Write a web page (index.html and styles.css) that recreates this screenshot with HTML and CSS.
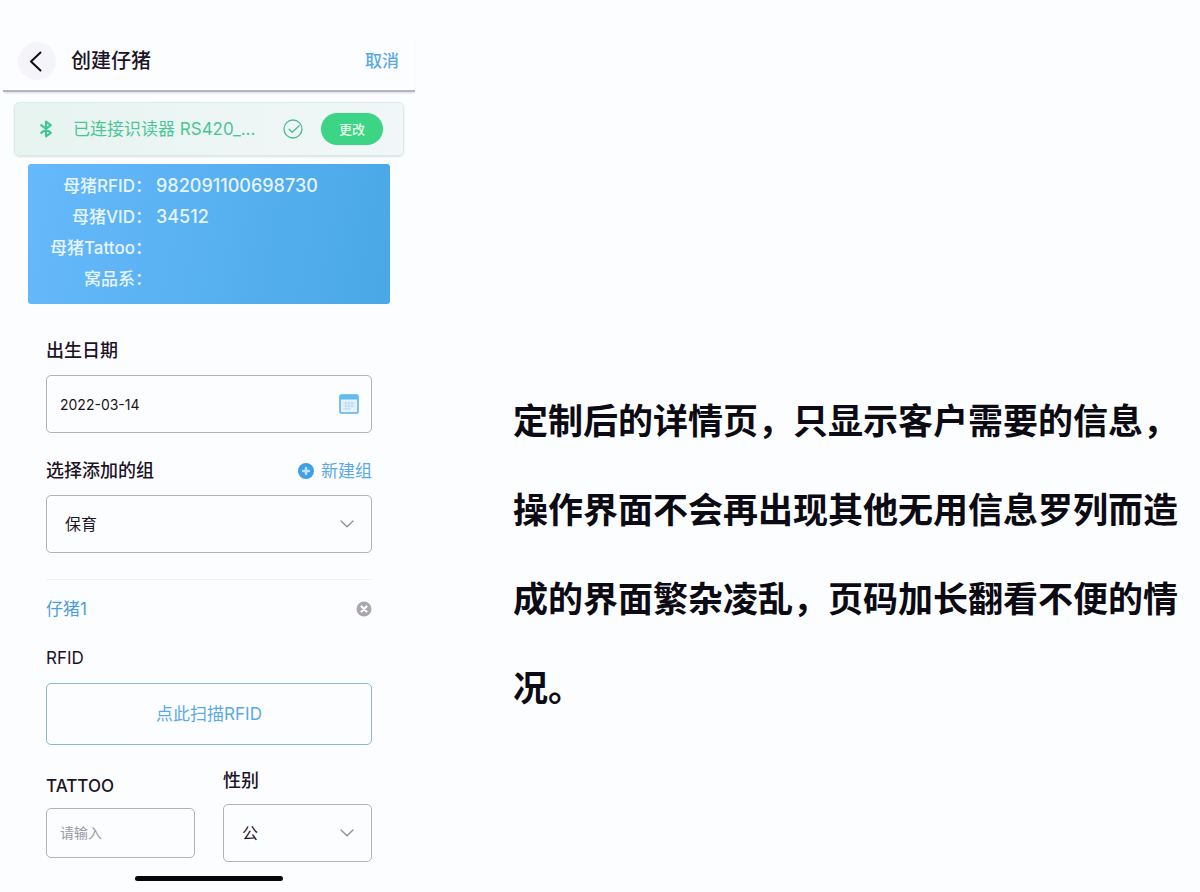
FILE: index.html
```html
<!DOCTYPE html>
<html lang="zh-CN">
<head>
<meta charset="utf-8">
<meta name="viewport" content="width=device-width, initial-scale=1">
<title>创建仔猪</title>
<link rel="stylesheet" href="styles.css">
</head>
<body>
<div class="page">
  <section class="phone">
    <header class="topbar">
      <button class="back" type="button" aria-label="返回">
        <svg width="38" height="38" viewBox="0 0 38 38" fill="none" stroke="#0f0a18" stroke-width="2" stroke-linecap="round" stroke-linejoin="round"><path d="M22.500 10.500L13 19.500l9.500 9"/></svg>
      </button>
      <h1 class="title">创建仔猪</h1>
      <button class="cancel" type="button">取消</button>
    </header>

    <div class="reader">
      <svg class="bluetooth" width="14" height="20" viewBox="0 0 16 20" fill="none" stroke="#3fc793" stroke-width="2.400" stroke-linejoin="round" stroke-linecap="round"><path d="M2.500 5.500l11 9L8 18.500v-17l5.500 4-11 9"/></svg>
      <span class="reader-name">已连接识读器 RS420_...</span>
      <svg class="check" width="20" height="20" viewBox="0 0 20 20" fill="none" stroke="#4fb98e" stroke-width="1.300" stroke-linecap="round" stroke-linejoin="round"><circle cx="10" cy="10" r="9"/><path d="M6.200 10.300l3 2.900 7-6.500"/></svg>
      <button class="change" type="button">更改</button>
    </div>

    <dl class="sow">
      <dt>母猪RFID：</dt><dd>982091100698730</dd>
      <dt>母猪VID：</dt><dd>34512</dd>
      <dt>母猪Tattoo：</dt><dd></dd>
      <dt>窝品系：</dt><dd></dd>
    </dl>

    <form class="form">
      <label class="label" for="birth">出生日期</label>
      <div class="field">
        <input class="box date" id="birth" type="text" value="2022-03-14">
        <svg class="mark" width="20" height="20" viewBox="0 0 20 20"><rect x="1" y="1" width="18" height="18" rx="1.500" fill="#e6f3fc" stroke="#5cb0e8" stroke-width="1.600"/><path d="M1 1h18v4.500H1z" fill="#5fbdf0"/><path d="M4 9h12M4 12h12M4 15h8M7 7.500v8M10 7.500v8M13 7.500v6" stroke="#b9d9f0" stroke-width="1"/></svg>
      </div>

      <div class="row group-row">
        <label class="label" for="group">选择添加的组</label>
        <button class="new-group" type="button">
          <svg width="16" height="16" viewBox="0 0 16 16"><circle cx="8" cy="8" r="8" fill="#3f9fe8"/><path d="M8 5v6M5 8h6" stroke="#bfe0fa" stroke-width="2.400" stroke-linecap="round"/></svg>
          新建组
        </button>
      </div>
      <div class="field">
        <select class="box select" id="group"><option>保育</option></select>
        <svg class="mark chevron" width="14" height="8" viewBox="0 0 14 8" fill="none" stroke="#8a8892" stroke-width="1.200" stroke-linecap="round" stroke-linejoin="round"><path d="M1 1l6 5.800L13 1"/></svg>
      </div>

      <hr class="rule">

      <div class="row piglet-row">
        <h2 class="piglet">仔猪1</h2>
        <button class="remove" type="button" aria-label="删除">
          <svg width="16" height="16" viewBox="0 0 16 16"><circle cx="8" cy="8" r="7.500" fill="#aaa6af"/><path d="M5.500 5.500l5 5M10.500 5.500l-5 5" stroke="#fff" stroke-width="2.200" stroke-linecap="round"/></svg>
        </button>
      </div>

      <div class="label rfid">RFID</div>
      <button class="scan" type="button">点此扫描RFID</button>

      <div class="pair">
        <div class="col">
          <label class="label tattoo" for="tattoo">TATTOO</label>
          <input class="box tattoo-box" id="tattoo" type="text" placeholder="请输入">
        </div>
        <div class="col">
          <label class="label" for="sex">性别</label>
          <div class="field">
            <select class="box select" id="sex"><option>公</option></select>
            <svg class="mark chevron" width="14" height="8" viewBox="0 0 14 8" fill="none" stroke="#8a8892" stroke-width="1.200" stroke-linecap="round" stroke-linejoin="round"><path d="M1 1l6 5.800L13 1"/></svg>
          </div>
        </div>
      </div>
    </form>
    <div class="home"></div>
  </section>

  <p class="note">定制后的详情页，只显示客户需要的信息，操作界面不会再出现其他无用信息罗列而造成的界面繁杂凌乱，页码加长翻看不便的情况。</p>
</div>
</body>
</html>
```
FILE: styles.css
```css
* {
  box-sizing: border-box;
}

body {
  margin: 0;
  background: #fcfdff;
  color: #1c1426;
  font-family: Inter, "Noto Sans CJK SC", sans-serif;
  font-size: 17px;
  line-height: 24px;
}

button,
input,
select {
  font: inherit;
  color: inherit;
  margin: 0;
}

button {
  border: 0;
  padding: 0;
  background: none;
  cursor: pointer;
}

svg {
  display: block;
  flex: none;
}

.page {
  display: flex;
  align-items: flex-start;
  min-height: 100vh;
}

.phone {
  flex: 0 0 35%;
  min-width: 360px;
  padding: 32px 5px 8px 3px;
}

.topbar {
  display: flex;
  align-items: center;
  height: 60px;
  padding: 0 16px 0 15px;
  border-bottom: 2px solid #b6b4be;
  box-shadow: 0 2px 2px -1px #d9d8e0;
}

.back {
  border-radius: 50%;
  background: #f5f5f9;
}

.title {
  flex: 1;
  margin: 0 0 0 15px;
  font-size: 20px;
  font-weight: 500;
}

.cancel {
  color: #5aa9e6;
  font-weight: 500;
}

.reader {
  display: flex;
  align-items: center;
  height: 54px;
  margin: 10px 11px 0;
  padding: 0 20px 0 24px;
  border: 1px solid #dcebe8;
  border-radius: 5px;
  background: linear-gradient(90deg, #e7f4f0, #f1f7f8);
  box-shadow: 0 1px 2px #d5e2e0;
  color: #4cc596;
}

.reader-name {
  flex: 1;
  margin-left: 20px;
  white-space: nowrap;
}

.change {
  width: 62px;
  height: 32px;
  margin-left: 18px;
  border-radius: 16px;
  background: #3bd585;
  color: #e9fbe9;
  font-size: 13px;
  font-weight: 500;
}

.sow {
  display: grid;
  grid-template-columns: 124px 1fr;
  grid-auto-rows: 31px;
  column-gap: 4px;
  align-items: center;
  margin: 8px 25px 0;
  padding: 6px 0 10px;
  border-radius: 3px;
  background: linear-gradient(100deg, #66b9fb, #4aa8e6);
  color: #e6f5ff;
  font-weight: 500;
}

.sow dt {
  text-align: right;
}

.sow dd {
  margin: 0;
  font-size: 18px;
}

.form {
  margin: 0 43px;
  padding-top: 35px;
}

.label {
  display: block;
  font-size: 18px;
  font-weight: 500;
}

.field {
  display: grid;
  align-items: center;
  margin-top: 12px;
}

.field > * {
  grid-area: 1 / 1;
}

.box {
  width: 100%;
  height: 58px;
  padding: 0 13px;
  border: 1px solid #b3b1bb;
  border-radius: 5px;
  background: #fcfdff;
  appearance: none;
  font-size: 16px;
}

.date {
  font-size: 14px;
}

.select {
  padding: 0 18px;
}

.mark {
  justify-self: end;
  margin-right: 13px;
  pointer-events: none;
}

.chevron {
  margin-right: 18px;
}

.row {
  display: flex;
  align-items: center;
  justify-content: space-between;
}

.group-row {
  margin-top: 26px;
}

.new-group {
  display: flex;
  align-items: center;
  gap: 7px;
  color: #5aa9e6;
}

.rule {
  height: 1px;
  margin: 26px 0 0;
  border: 0;
  background: #eaf1f7;
}

.piglet-row {
  margin-top: 17px;
}

.piglet {
  margin: 0;
  color: #4f9edb;
  font-size: 17px;
  font-weight: 400;
}

.rfid {
  margin-top: 25px;
  font-size: 17px;
  font-weight: 400;
}

.scan {
  width: 100%;
  height: 62px;
  margin-top: 13px;
  border: 1px solid #86bbdc;
  border-radius: 5px;
  color: #5aa9e6;
}

.pair {
  display: grid;
  grid-template-columns: 1fr 1fr;
  gap: 28px;
  align-items: center;
  margin-top: 24px;
}

.pair .field {
  margin-top: 11px;
}

.tattoo {
  font-size: 17px;
}

.tattoo-box {
  height: 50px;
  margin-top: 10px;
  font-size: 14px;
}

.tattoo-box::placeholder {
  color: #9a98a4;
  opacity: 1;
}

.home {
  width: 148px;
  height: 5px;
  margin: 14px auto 0;
  border-radius: 3px;
  background: #08070d;
}

.note {
  flex: 1;
  align-self: center;
  margin: 0;
  padding: 218px 8px 0 93px;
  color: #0c0a12;
  font-size: 35px;
  font-weight: 700;
  line-height: 89px;
}
```
